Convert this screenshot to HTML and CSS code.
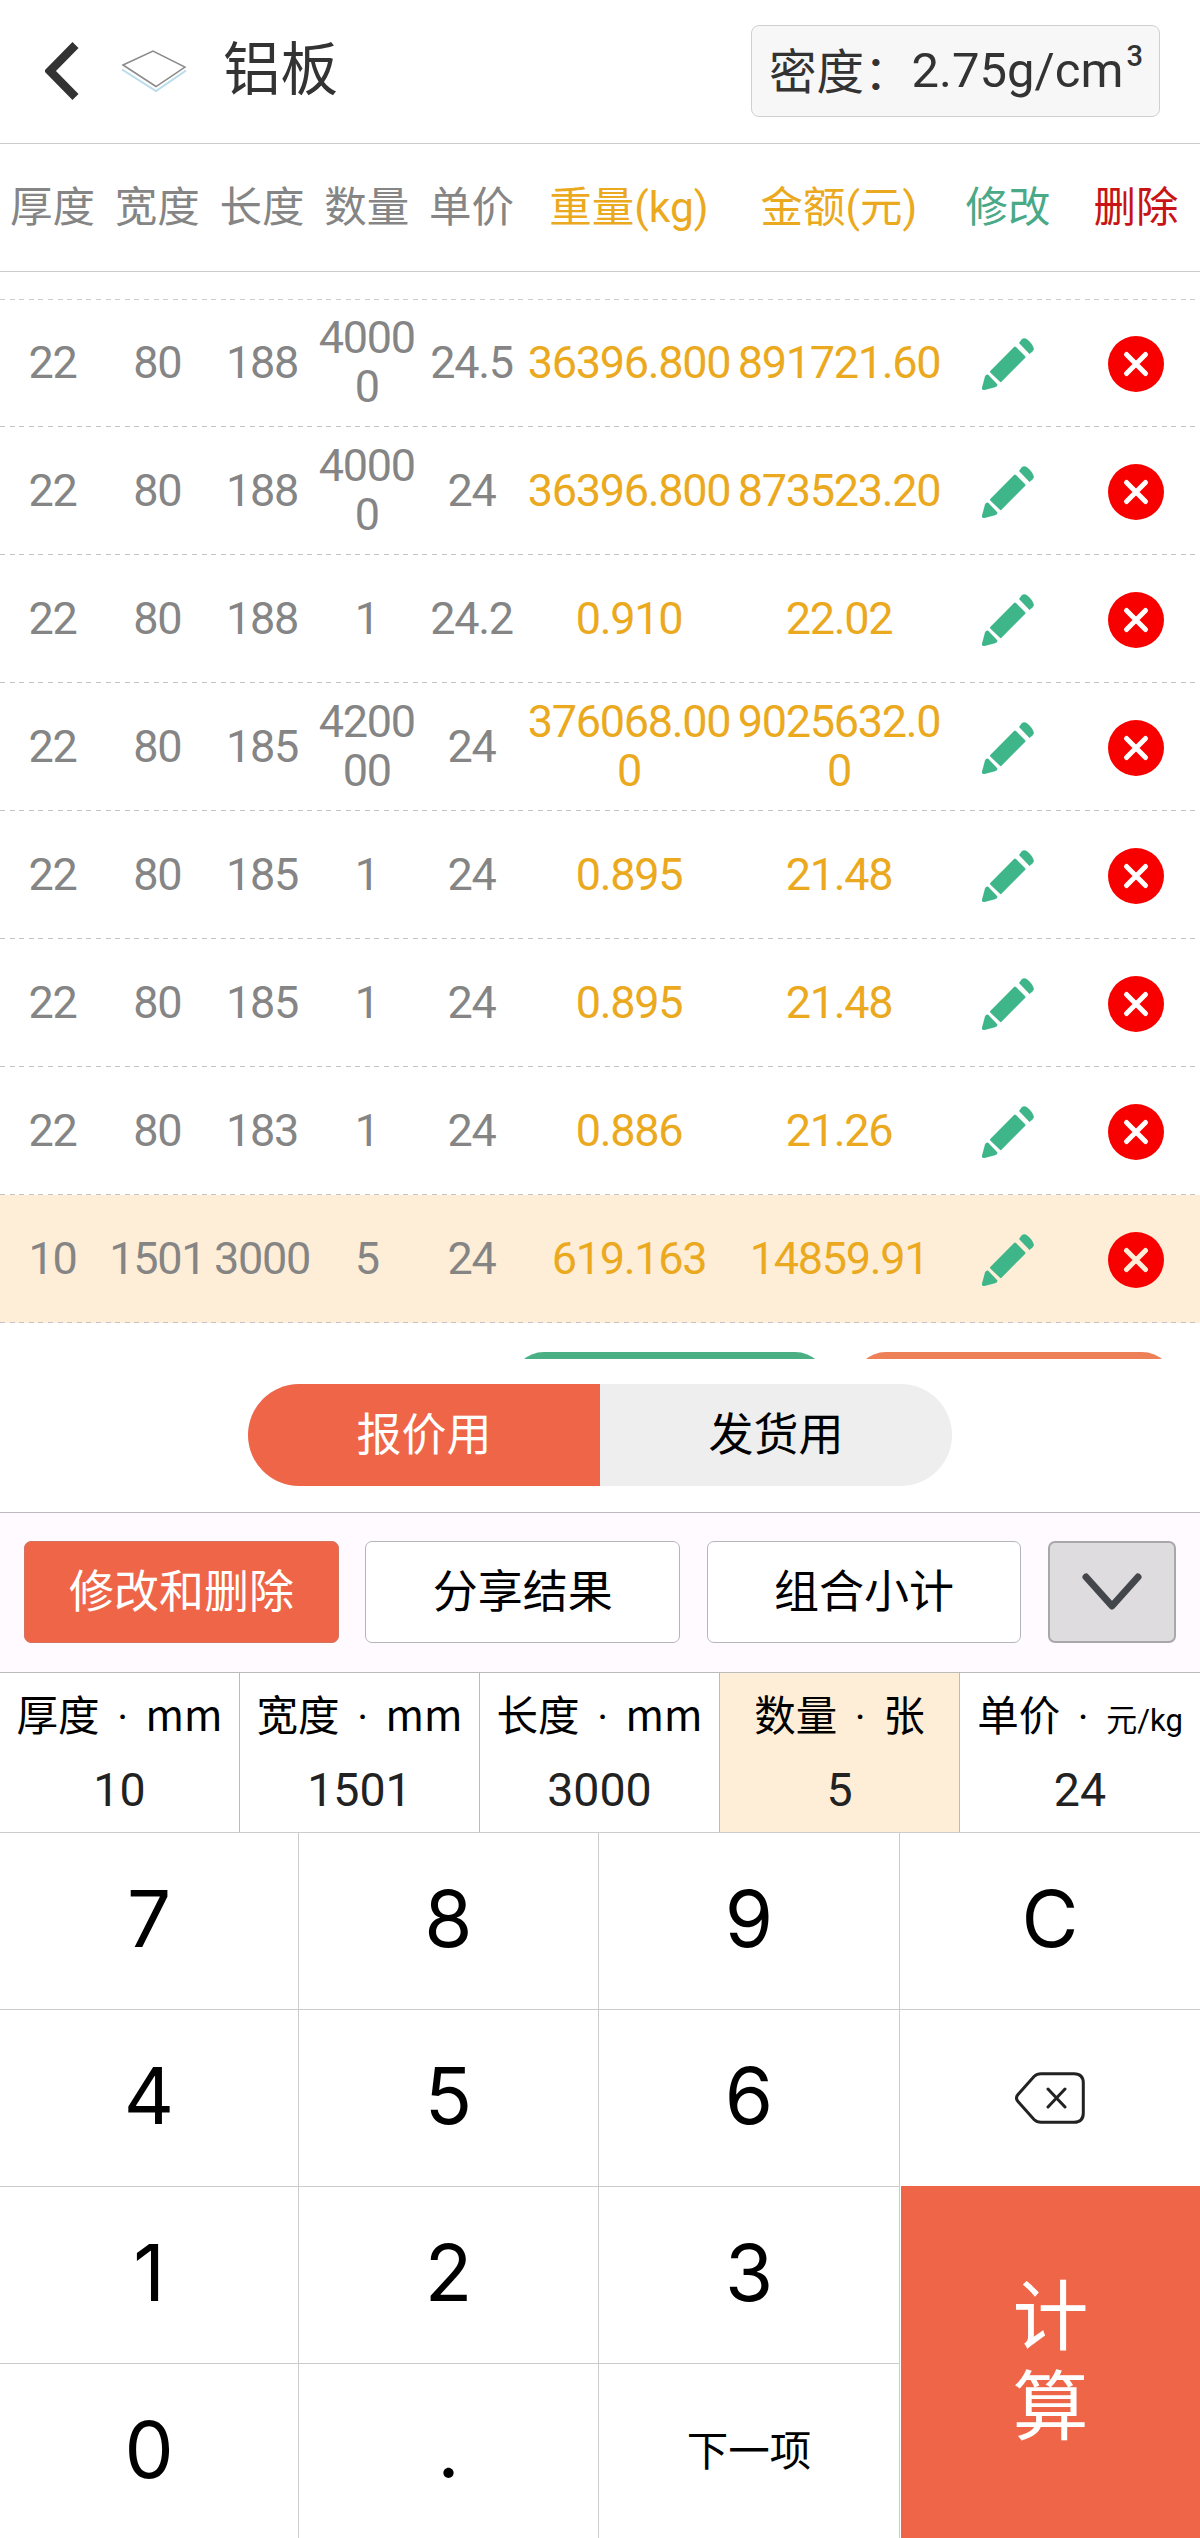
FILE: index.html
```html
<!DOCTYPE html>
<html lang="zh-CN">
<head>
<meta charset="utf-8">
<title>铝板</title>
<link rel="stylesheet" href="styles.css">
</head>
<body>
<svg class="defs" width="0" height="0" aria-hidden="true">
  <symbol id="pencil" viewBox="0 0 52 52">
    <path d="M37 5L39.500 1.500Q42 -1 45 1.200Q50 5 51.500 9.500Q52.500 12 50.500 13.500L47.500 16Z"/>
    <path d="M32 9Q33 8 34 9L43 18Q44 19 43 20L19.700 43.500Q18.700 44.500 17.700 43.500L8.500 34.700Q7.500 33.700 8.500 32.700Z"/>
    <path d="M6 36.500L15.500 46.500Q15.500 48.500 13 49.300L2.500 52Q-0.300 52.500 0 49.500L3 38.500Q4 36 6 36.500Z"/>
  </symbol>
  <symbol id="remove" viewBox="0 0 56 56">
    <circle cx="28" cy="28" r="28" fill="#f90000"/>
    <path d="M18.500 18.500L37.500 37.500M37.500 18.500L18.500 37.500" fill="none" stroke="currentColor" stroke-width="5" stroke-linecap="round"/>
  </symbol>
</svg>
<header class="topbar">
  <svg class="back" width="34" height="58" viewBox="0 0 34 58"><path d="M30.500 3L5 29L30.500 55" fill="none" stroke="#333" stroke-width="8.500"/></svg>
  <svg class="plate" width="66" height="44" viewBox="0 0 66 44">
    <path d="M1 20.500L35 42L65 21.500" fill="none" stroke="#b9dcec" stroke-width="2"/>
    <path d="M2 16L32 2L64 18L35 37.500Z" fill="#fff" stroke="#8b8b8b" stroke-width="1.500"/>
  </svg>
  <h1 class="title">铝板</h1>
  <div class="density">密度：<span class="latin">2.75g/cm<sup>3</sup></span></div>
</header>
<div class="grid head">
  <span>厚度</span><span>宽度</span><span>长度</span><span>数量</span><span>单价</span><span class="gold">重量(kg)</span><span class="gold">金额(元)</span><span class="green">修改</span><span class="red">删除</span>
</div>
<main class="list">
  <div class="grid row"><span>22</span><span>80</span><span>188</span><span>40000</span><span>24.5</span><span class="gold">36396.800</span><span class="gold">891721.60</span><svg class="edit"><use href="#pencil"/></svg><svg class="del"><use href="#remove"/></svg></div>
  <div class="grid row"><span>22</span><span>80</span><span>188</span><span>40000</span><span>24</span><span class="gold">36396.800</span><span class="gold">873523.20</span><svg class="edit"><use href="#pencil"/></svg><svg class="del"><use href="#remove"/></svg></div>
  <div class="grid row"><span>22</span><span>80</span><span>188</span><span>1</span><span>24.2</span><span class="gold">0.910</span><span class="gold">22.02</span><svg class="edit"><use href="#pencil"/></svg><svg class="del"><use href="#remove"/></svg></div>
  <div class="grid row"><span>22</span><span>80</span><span>185</span><span>420000</span><span>24</span><span class="gold">376068.000</span><span class="gold">9025632.00</span><svg class="edit"><use href="#pencil"/></svg><svg class="del"><use href="#remove"/></svg></div>
  <div class="grid row"><span>22</span><span>80</span><span>185</span><span>1</span><span>24</span><span class="gold">0.895</span><span class="gold">21.48</span><svg class="edit"><use href="#pencil"/></svg><svg class="del"><use href="#remove"/></svg></div>
  <div class="grid row"><span>22</span><span>80</span><span>185</span><span>1</span><span>24</span><span class="gold">0.895</span><span class="gold">21.48</span><svg class="edit"><use href="#pencil"/></svg><svg class="del"><use href="#remove"/></svg></div>
  <div class="grid row"><span>22</span><span>80</span><span>183</span><span>1</span><span>24</span><span class="gold">0.886</span><span class="gold">21.26</span><svg class="edit"><use href="#pencil"/></svg><svg class="del"><use href="#remove"/></svg></div>
  <div class="grid row active"><span>10</span><span>1501</span><span>3000</span><span>5</span><span>24</span><span class="gold">619.163</span><span class="gold">14859.91</span><svg class="edit"><use href="#pencil"/></svg><svg class="del"><use href="#remove"/></svg></div>
  <div class="actions"><div class="pill pill-green"></div><div class="pill pill-orange"></div></div>
</main>
<div class="switch">
  <div class="side on">报价用</div><div class="side">发货用</div>
</div>
<div class="toolbar">
  <div class="btn primary">修改和删除</div>
  <div class="btn">分享结果</div>
  <div class="btn">组合小计</div>
  <div class="btn fold"><svg width="60" height="38" viewBox="0 0 60 38"><path d="M4 4L30 33L56 4" fill="none" stroke="#43474b" stroke-width="7" stroke-linecap="round" stroke-linejoin="round"/></svg></div>
</div>
<div class="fields">
  <div class="field"><div class="label">厚度<i>·</i>mm</div><div class="value">10</div></div>
  <div class="field"><div class="label">宽度<i>·</i>mm</div><div class="value">1501</div></div>
  <div class="field"><div class="label">长度<i>·</i>mm</div><div class="value">3000</div></div>
  <div class="field current"><div class="label">数量<i>·</i>张</div><div class="value">5</div></div>
  <div class="field"><div class="label">单价<i>·</i><small>元/kg</small></div><div class="value">24</div></div>
</div>
<div class="keypad">
  <div class="key">7</div><div class="key">8</div><div class="key">9</div><div class="key">C</div>
  <div class="key">4</div><div class="key">5</div><div class="key">6</div>
  <div class="key"><svg width="70" height="52" viewBox="0 0 70 52"><path d="M26 1.700H59Q68.300 1.700 68.300 11V41Q68.300 50.300 59 50.300H26Q22 50.300 19 47.500L3 29.500Q0 26 3 22.500L19 4.500Q22 1.700 26 1.700ZM33 17L50 35M50 17L33 35" fill="none" stroke="#222" stroke-width="3" stroke-linecap="round"/></svg></div>
  <div class="key">1</div><div class="key">2</div><div class="key">3</div><div class="key calc">计<br>算</div>
  <div class="key">0</div><div class="key">.</div><div class="key next">下一项</div>
</div>
</body>
</html>
```

FILE: styles.css
```css
* { box-sizing: border-box; }
body {
  margin: 0;
  width: 1200px;
  height: 2538px;
  overflow: hidden;
  display: flex;
  flex-direction: column;
  background: #fff;
  color: #000;
  font-family: Roboto, "Noto Sans CJK SC", sans-serif;
}
.defs { position: absolute; }

.topbar {
  height: 144px;
  flex: none;
  display: flex;
  align-items: center;
  padding: 0 40px 2px 45px;
  border-bottom: 1px solid #ccc;
}
.plate { margin-left: 42px; }
.title {
  margin: 0 0 0 36px;
  font-size: 57.500px;
  line-height: 80px;
  font-weight: 400;
  color: #333;
}
.density {
  margin-left: auto;
  width: 409px;
  height: 92px;
  display: flex;
  align-items: center;
  padding: 0 0 4px 17px;
  border: 1px solid #d0d0d0;
  border-radius: 8px;
  background: #f7f7f7;
  color: #333;
  font-size: 47.5px;
  white-space: nowrap;
}
.latin { font-size: 49px; padding-top: 3px; }
.latin sup {
  font-size: 29px;
  line-height: 0;
  vertical-align: 21px;
  font-weight: 500;
  margin-left: 3px;
}

.grid {
  display: grid;
  grid-template-columns: repeat(5, 104.800px) 210px 210px 128px 128px;
  align-items: center;
  justify-items: center;
  text-align: center;
  color: #858585;
}
.head {
  height: 128px;
  flex: none;
  padding-bottom: 8px;
  border-bottom: 1px solid #ccc;
  font-size: 42.500px;
}
.gold { color: #eba920; }
.green { color: #4aa987; }
.red { color: #c81414; }

.list {
  height: 1087px;
  flex: none;
  overflow: hidden;
  padding-top: 27px;
  background: repeating-linear-gradient(90deg, #ccc 0 5px, #fff 5px 9.600px) 0 27px / 100% 1px no-repeat;
}
.row {
  height: 128px;
  padding-top: 2px;
  font-size: 45px;
  line-height: 49px;
  letter-spacing: -1.300px;
  background: repeating-linear-gradient(90deg, #c4c4c4 0 5px, transparent 5px 9.600px) 0 100% / 100% 1px no-repeat;
}
.row span { width: 100%; word-break: break-all; padding-bottom: 4px; }
.row.active { background-color: #ffeed7; }
.edit { width: 52px; height: 52px; fill: #3fb68a; }
.del { width: 56px; height: 56px; color: #fff; }
.active .del { color: #ffeed7; }
.actions { display: flex; gap: 27px; justify-content: flex-end; padding: 29px 26px 0 0; }
.pill { height: 96px; border-radius: 32px; }
.pill-green { width: 315px; background: #4ab084; }
.pill-orange { width: 320px; background: #ee8058; }

.switch {
  width: 704px;
  height: 102px;
  flex: none;
  align-self: center;
  margin: 25px 0 26px;
  display: flex;
  border-radius: 51px;
  overflow: hidden;
  background: #eee;
}
.side {
  flex: 1;
  display: flex;
  align-items: center;
  justify-content: center;
  padding-bottom: 8px;
  font-size: 45px;
}
.side.on { background: #ef6548; color: #fff; }

.toolbar {
  height: 161px;
  flex: none;
  display: flex;
  align-items: center;
  gap: 26.500px;
  padding: 0 24px 2px;
  border: solid #bbb;
  border-width: 1px 0;
  background: #fefaff;
}
.btn {
  flex: 1;
  height: 102px;
  display: flex;
  align-items: center;
  justify-content: center;
  padding-bottom: 7px;
  border: 1px solid #b5b5b9;
  border-radius: 7px;
  background: #fff;
  font-size: 45px;
}
.primary { background: #ef6548; border-color: #d4745f; color: #fff; }
.fold { flex: none; width: 128px; background: #dedcdf; border: 2px solid #a9a7aa; padding: 0; }

.fields { height: 159px; flex: none; display: grid; grid-template-columns: repeat(5, 1fr); }
.field {
  padding-top: 10px;
  border-right: 1px solid #bbb;
  text-align: center;
  white-space: nowrap;
}
.field:last-child { border-right: 0; }
.current { background: #ffeed7; }
.label { height: 60px; line-height: 60px; font-size: 41.500px; font-family: "Noto Sans CJK SC", sans-serif; }
.label i { display: inline-block; width: 46px; font-style: normal; font-family: Roboto, sans-serif; }
.label small { font-size: 31px; font-family: Roboto, "Noto Sans CJK SC", sans-serif; }
.value { padding-top: 19px; line-height: 56px; font-size: 46.500px; color: #222; }

.keypad {
  flex: none;
  height: 707px;
  display: grid;
  grid-template-columns: 299px 300px 301px 300px;
  grid-template-rows: 177px 177px 177px 176px;
}
.key {
  display: flex;
  align-items: center;
  justify-content: center;
  padding-bottom: 5px;
  border-top: 1px solid #ccc;
  border-right: 1px solid #ccc;
  font-family: Inter, sans-serif;
  font-size: 78px;
}
.key:nth-child(4), .key:nth-child(8) { border-right: 0; }
.key svg { margin-top: 4px; }
.calc {
  grid-row: span 2;
  border: 0;
  padding: 0 0 13px;
  margin-left: 1px;
  background: #ef6548;
  color: #fff;
  line-height: 90px;
  font-size: 76px;
  font-family: "Noto Sans CJK SC", sans-serif;
}
.next { padding-bottom: 7px; font-size: 41.500px; font-family: "Noto Sans CJK SC", sans-serif; }
```
